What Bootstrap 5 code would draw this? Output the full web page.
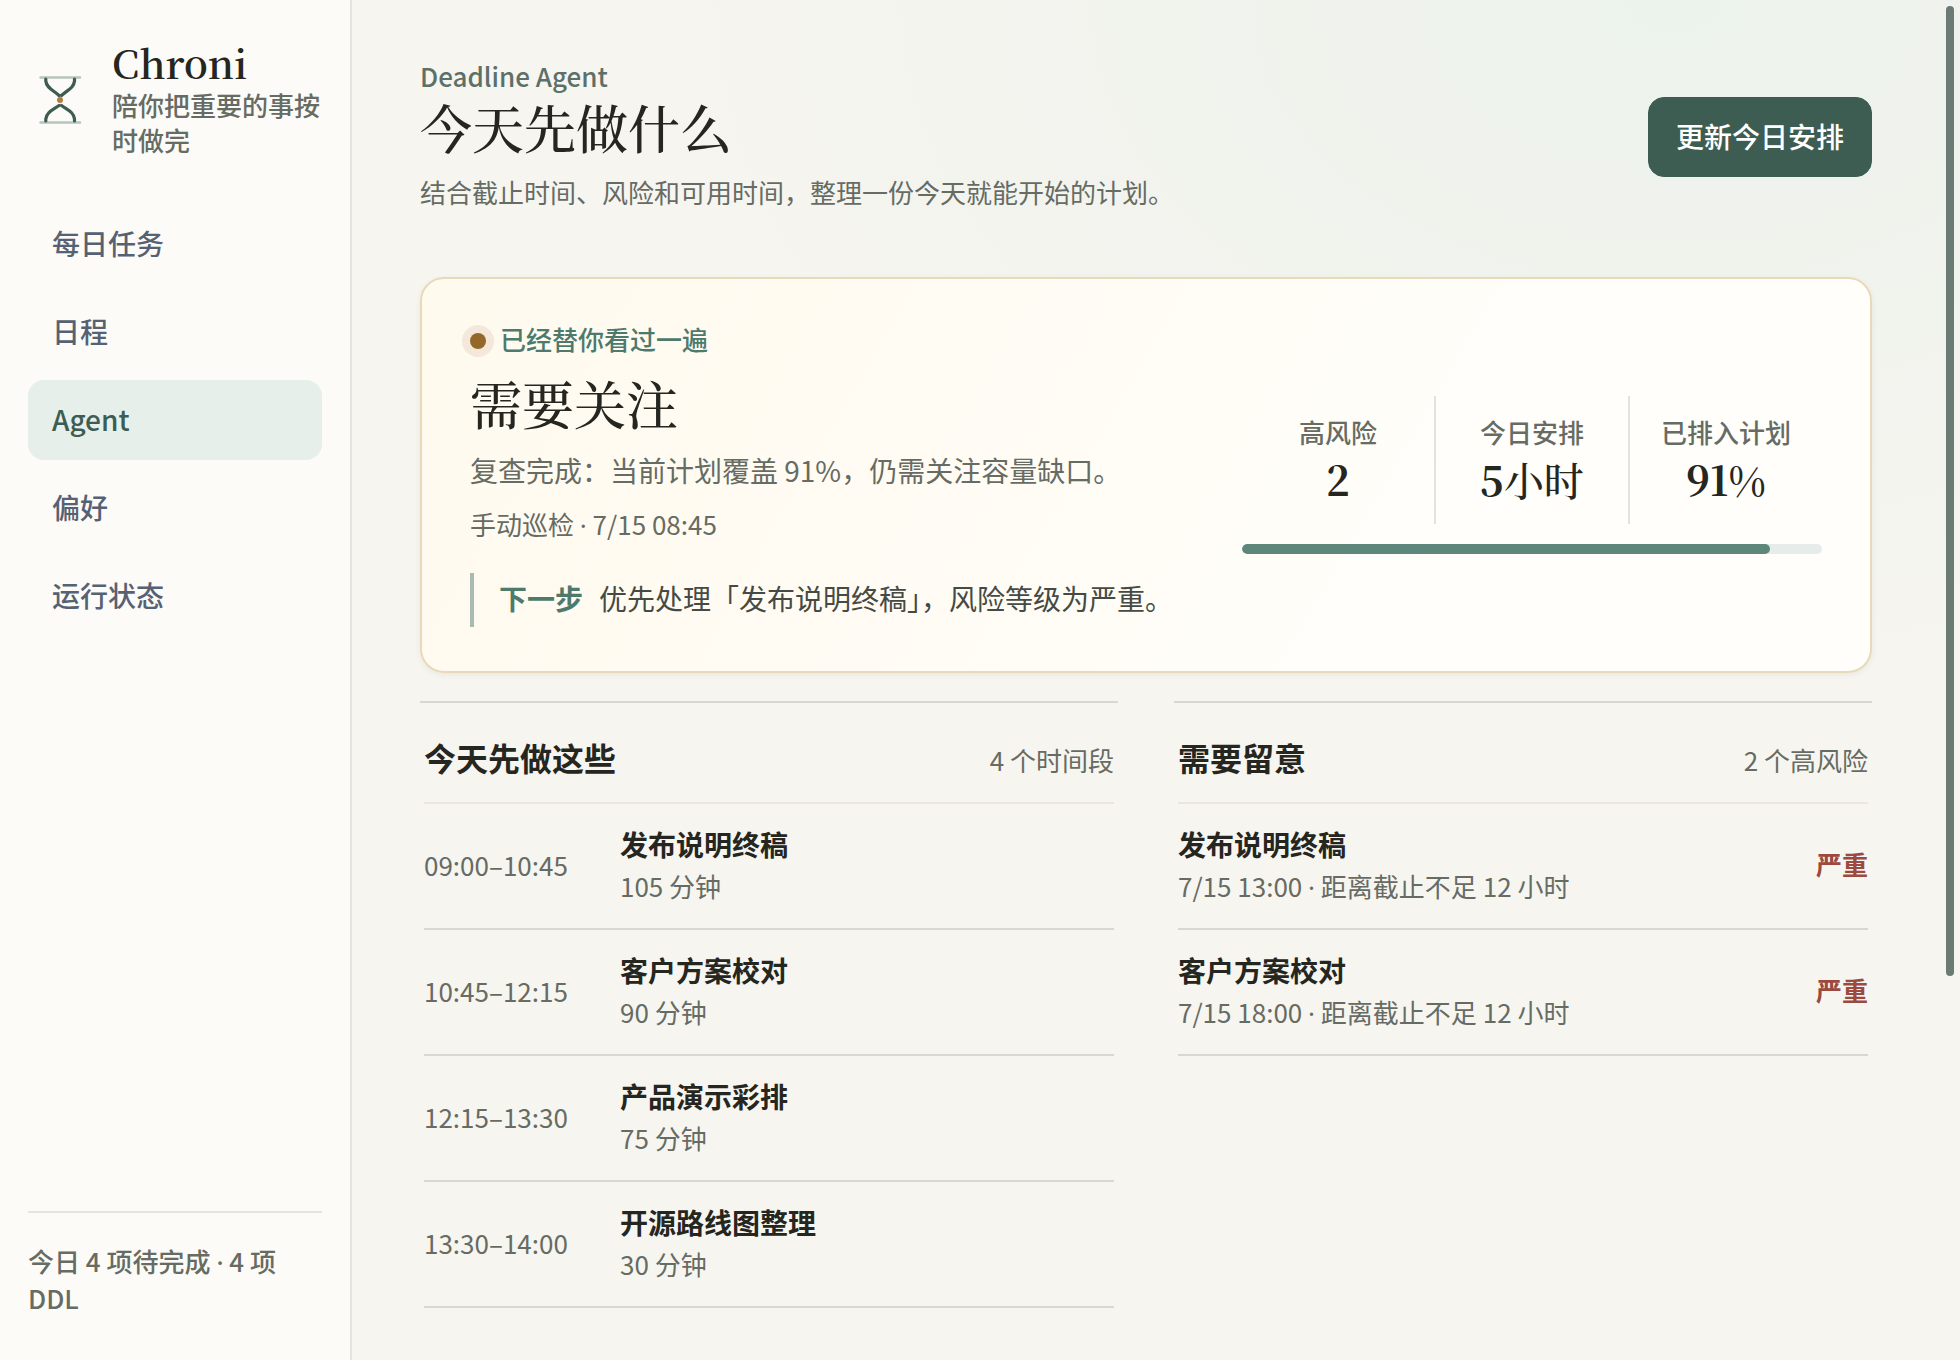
<!DOCTYPE html>
<html lang="zh-CN">
<head>
<meta charset="utf-8">
<meta name="viewport" content="width=device-width, initial-scale=1">
<title>Chroni</title>
<link href="https://cdn.jsdelivr.net/npm/bootstrap@5.3.0/dist/css/bootstrap.min.css" rel="stylesheet">
<style>
:root{--ink:#262621;--muted-ink:#666b63;--brand:#3d5c52;--teal:#4d7a6c;--serif:"Noto Serif CJK SC","Liberation Serif",serif}
body{font-family:"Noto Sans CJK SC",sans-serif;font-size:26px;line-height:36px;color:var(--ink);background:#f6f5f0}
.app{min-height:100vh}
.sidebar{width:352px;padding:44px 28px;background:#fcfbf7;border-right:2px solid #e5e4e0}
.brand{gap:20px;height:112px}
.brand-name{font-family:var(--serif);font-size:39px;line-height:38px;padding-bottom:6px;font-weight:600}
.brand-sub{line-height:35px;color:var(--muted-ink);font-weight:500}
.side-nav{gap:8px;margin-top:48px}
.side-nav .nav-link{height:80px;padding:0 24px 2px;border-radius:16px;font-size:28px;font-weight:500;color:#566273}
.side-nav .nav-link.active{background:#e6efea;color:var(--brand)}
.side-foot{border-top:2px solid #e5e4e0;padding-top:29px;line-height:37px;color:var(--muted-ink);font-weight:500}
.sep{font-family:"Noto Sans",sans-serif;line-height:1}
.main-area{padding:58px 88px 48px 68px;background:radial-gradient(ellipse 1000px 680px at 82% 0,#ecf2ec 0%,rgba(239,242,236,.8) 40%,rgba(246,245,240,0) 100%),#f6f5f0}
.eyebrow{color:#5d7068;font-weight:500}
.page-title{font-family:var(--serif);font-size:52px;line-height:64px;font-weight:500;margin:1px 0 15px}
.page-desc{padding-bottom:5px}
.soft{color:var(--muted-ink)}
.btn-update{--bs-btn-color:#fff;--bs-btn-bg:#3d5c52;--bs-btn-border-color:#3d5c52;--bs-btn-hover-color:#fff;--bs-btn-hover-bg:#334e45;--bs-btn-font-size:28px;--bs-btn-border-radius:16px;--bs-btn-padding-x:27px;height:80px;padding-bottom:8px;font-weight:500}
.status-card{margin-top:62px;padding:42px 48px 44px;border:2px solid #e8d9b8;border-radius:24px;background:linear-gradient(120deg,#fffaee 0%,#fffcf5 45%,#fffefa 70%);box-shadow:0 2px 6px rgba(38,38,33,.06)}
.status-dot{width:16px;height:16px;margin-top:4px;border-radius:50%;background:#946829;box-shadow:0 0 0 8px #f4e8db}
.seen{gap:14px;color:var(--teal);font-weight:500}
.status-title{font-family:var(--serif);font-size:52px;line-height:64px;font-weight:500;margin:14px 0 15px}
.status-text{font-size:28px;line-height:40px}
.next-step{gap:16px;margin-top:31px;padding:5px 25px 9px;border-left:4px solid #a9bbb2;font-size:28px;line-height:40px;color:#454a44}
.next-step strong{color:var(--teal)}
.stat-side{width:580px;padding-top:2px}
.stat-row > div{height:128px;padding-top:18px}
.stat-row > div + div{border-left:2px solid #e3e3de}
.stat-name{color:var(--muted-ink);font-weight:500}
.stat-num{font-family:var(--serif);font-size:40px;line-height:58px;font-weight:500}
.stat-num b{font-weight:700}
.cover{--bs-progress-height:10px;--bs-progress-bg:#e6ecea;--bs-progress-bar-bg:#5c877a;--bs-progress-border-radius:5px;margin-top:20px}
.cover .progress-bar{border-radius:5px}
.lists{gap:56px;margin-top:28px}
.list-col{border-top:2px solid #d8d8d3;padding:0 4px;flex:1 1 0}
.list-head{height:101px;padding-top:31px;border-bottom:2px solid #ebe6e0}
.list-head h3{font-size:32px;line-height:46px;font-weight:700}
.list-head span{line-height:52px}
.entry{padding:17px 0 23px;border-bottom:2px solid #d8d8d2}
.entry-time{width:196px;padding-top:3px}
.entry-name{font-size:28px;line-height:46px;font-weight:700}
.entry-note{line-height:38px}
.severity{padding-top:2px;color:#9c493f;font-weight:600}
.scroll-thumb{position:fixed;top:6px;right:6px;width:8px;height:calc(71.7vh - 5px);border-radius:4px;background:#697b74}
</style>
</head>
<body>
<div class="app d-flex">
  <aside class="sidebar d-flex flex-column flex-shrink-0">
    <div class="brand d-flex align-items-center">
      <svg width="64" height="64" viewBox="0 0 64 64" fill="none" stroke-linecap="round" class="flex-shrink-0" aria-hidden="true">
        <path d="M12.500 9.500H52M12.500 54.500H52" stroke="#b7c5bd" stroke-width="2.500"/>
        <path d="M17.800 11V13C18.500 20 25 22 31 27.500M46.500 11V13C45.800 20 39.500 22 33.500 27.500M17.800 53V51C18.500 44 25 42 31 37.500M46.500 53V51C45.800 44 39.500 42 33.500 37.500" stroke="#3d5c52" stroke-width="3.200"/>
        <circle cx="32" cy="32" r="3" fill="#b37c3d"/>
      </svg>
      <div>
        <div class="brand-name">Chroni</div>
        <div class="brand-sub">陪你把重要的事按时做完</div>
      </div>
    </div>
    <nav class="side-nav nav flex-column" aria-label="主导航">
      <a class="nav-link d-flex align-items-center" href="#">每日任务</a>
      <a class="nav-link d-flex align-items-center" href="#">日程</a>
      <a class="nav-link d-flex align-items-center active" aria-current="page" href="#">Agent</a>
      <a class="nav-link d-flex align-items-center" href="#">偏好</a>
      <a class="nav-link d-flex align-items-center" href="#">运行状态</a>
    </nav>
    <div class="side-foot mt-auto">今日 4 项待完成 <span class="sep">·</span> 4 项 DDL</div>
  </aside>

  <main class="main-area flex-grow-1">
    <header class="d-flex justify-content-between align-items-center">
      <div>
        <div class="eyebrow">Deadline Agent</div>
        <h1 class="page-title">今天先做什么</h1>
        <p class="page-desc soft mb-0">结合截止时间、风险和可用时间，整理一份今天就能开始的计划。</p>
      </div>
      <button type="button" class="btn btn-update">更新今日安排</button>
    </header>

    <section class="status-card d-flex justify-content-between align-items-center">
      <div>
        <div class="seen d-flex align-items-center"><span class="status-dot"></span>已经替你看过一遍</div>
        <h2 class="status-title">需要关注</h2>
        <p class="status-text soft mb-3">复查完成：当前计划覆盖 91%，仍需关注容量缺口。</p>
        <p class="soft mb-0">手动巡检 <span class="sep">·</span> 7/15 08:45</p>
        <div class="next-step d-flex"><strong>下一步</strong><span>优先处理「发布说明终稿」，风险等级为严重。</span></div>
      </div>
      <div class="stat-side flex-shrink-0">
        <div class="stat-row row g-0 text-center">
          <div class="col"><div class="stat-name">高风险</div><div class="stat-num"><b>2</b></div></div>
          <div class="col"><div class="stat-name">今日安排</div><div class="stat-num"><b>5</b>小时</div></div>
          <div class="col"><div class="stat-name">已排入计划</div><div class="stat-num"><b>91</b>%</div></div>
        </div>
        <div class="progress cover" role="progressbar" aria-label="已排入计划" aria-valuenow="91" aria-valuemin="0" aria-valuemax="100"><div class="progress-bar" style="width:91%"></div></div>
      </div>
    </section>

    <div class="lists d-flex align-items-start">
      <section class="list-col">
        <div class="list-head d-flex justify-content-between"><h3 class="mb-0">今天先做这些</h3><span class="soft">4 个时间段</span></div>
        <div class="entry d-flex align-items-center"><span class="entry-time soft">09:00–10:45</span><div><div class="entry-name">发布说明终稿</div><div class="entry-note soft">105 分钟</div></div></div>
        <div class="entry d-flex align-items-center"><span class="entry-time soft">10:45–12:15</span><div><div class="entry-name">客户方案校对</div><div class="entry-note soft">90 分钟</div></div></div>
        <div class="entry d-flex align-items-center"><span class="entry-time soft">12:15–13:30</span><div><div class="entry-name">产品演示彩排</div><div class="entry-note soft">75 分钟</div></div></div>
        <div class="entry d-flex align-items-center"><span class="entry-time soft">13:30–14:00</span><div><div class="entry-name">开源路线图整理</div><div class="entry-note soft">30 分钟</div></div></div>
      </section>
      <section class="list-col">
        <div class="list-head d-flex justify-content-between"><h3 class="mb-0">需要留意</h3><span class="soft">2 个高风险</span></div>
        <div class="entry d-flex align-items-center justify-content-between"><div><div class="entry-name">发布说明终稿</div><div class="entry-note soft">7/15 13:00 <span class="sep">·</span> 距离截止不足 12 小时</div></div><span class="severity">严重</span></div>
        <div class="entry d-flex align-items-center justify-content-between"><div><div class="entry-name">客户方案校对</div><div class="entry-note soft">7/15 18:00 <span class="sep">·</span> 距离截止不足 12 小时</div></div><span class="severity">严重</span></div>
      </section>
    </div>
  </main>
</div>
<div class="scroll-thumb" aria-hidden="true"></div>
<script src="https://cdn.jsdelivr.net/npm/bootstrap@5.3.0/dist/js/bootstrap.bundle.min.js"></script>
</body>
</html>
